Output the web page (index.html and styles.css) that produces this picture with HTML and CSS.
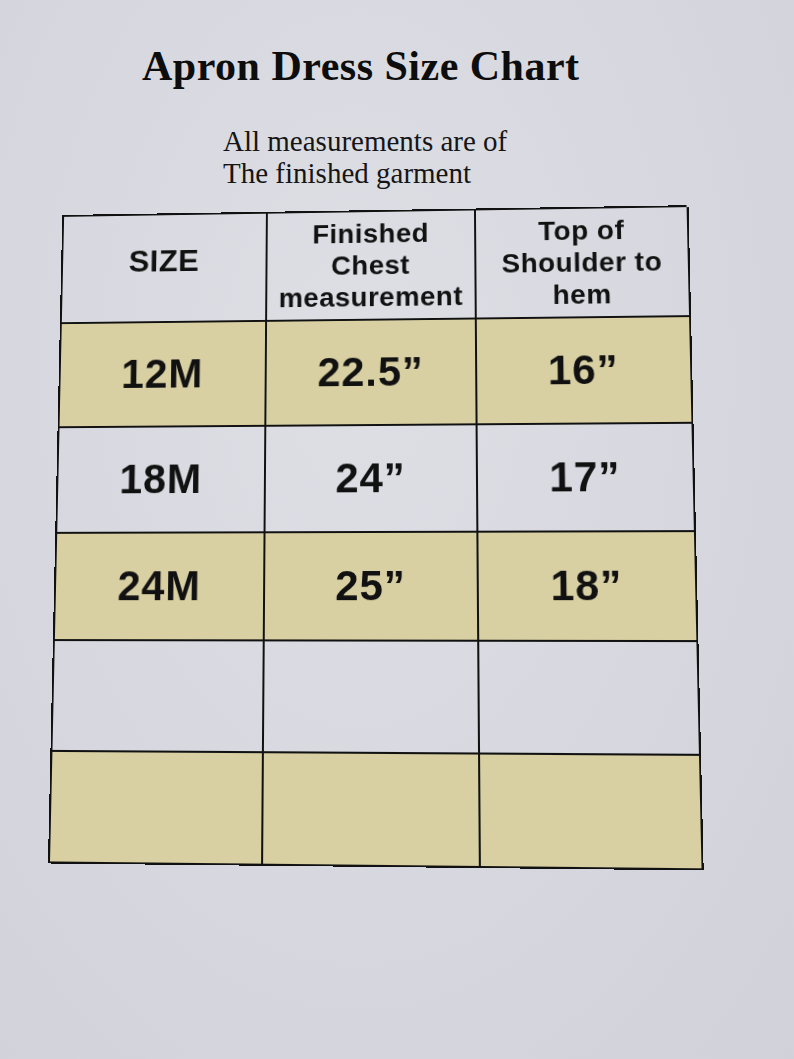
FILE: index.html
```html
<!DOCTYPE html>
<html lang="en">
<head>
<meta charset="utf-8">
<title>Apron Dress Size Chart</title>
<link rel="stylesheet" href="styles.css">
</head>
<body>
<main class="sheet">
  <h1 class="title">Apron Dress Size Chart</h1>
  <p class="note">All measurements are of<br>The finished garment</p>
  <div class="chart">
    <div class="cell head size">SIZE</div>
    <div class="cell head">Finished<br>Chest<br>measurement</div>
    <div class="cell head">Top of<br>Shoulder to<br>hem</div>

    <div class="cell data tint">12M</div>
    <div class="cell data tint">22.5”</div>
    <div class="cell data tint">16”</div>

    <div class="cell data">18M</div>
    <div class="cell data">24”</div>
    <div class="cell data">17”</div>

    <div class="cell data tint">24M</div>
    <div class="cell data tint">25”</div>
    <div class="cell data tint">18”</div>

    <div class="cell data"></div>
    <div class="cell data"></div>
    <div class="cell data"></div>

    <div class="cell data tint"></div>
    <div class="cell data tint"></div>
    <div class="cell data tint"></div>
  </div>
</main>
</body>
</html>
```

FILE: styles.css
```css
html, body {
  margin: 0;
  padding: 0;
}
body {
  width: 794px;
  height: 1059px;
  overflow: hidden;
  background: radial-gradient(ellipse at 45% 35%, #dedfe5 0%, #d7d8df 55%, #d0d1d9 100%);
  color: #111;
}
.sheet {
  display: flex;
  flex-direction: column;
  padding-top: 42px;
}
.title {
  margin: 0;
  padding-left: 142px;
  font-family: "Liberation Serif", "Times New Roman", serif;
  font-weight: bold;
  font-size: 42px;
  line-height: 48px;
  letter-spacing: 0.5px;
  color: #0d0d0d;
}
.note {
  margin: 35px 0 0 0;
  padding-left: 223px;
  font-family: "Liberation Serif", "Times New Roman", serif;
  font-size: 29px;
  line-height: 32px;
  color: #151515;
}
.chart {
  margin: 13px 0 0 51px;
  width: 639px;
  display: grid;
  grid-template-columns: 212px 213px 214px;
  grid-template-rows: 113px 108px 108px 108px 110px 109px;
  border-top: 2px solid #111;
  border-left: 2px solid #111;
  box-sizing: border-box;
  transform: perspective(1000px) rotateX(4deg) rotateY(-2.3deg);
  transform-origin: 50% 50%;
}
.cell {
  border-right: 2px solid #111;
  border-bottom: 2px solid #111;
  display: flex;
  align-items: center;
  justify-content: center;
  text-align: center;
  font-family: "Liberation Sans", Arial, sans-serif;
  font-weight: bold;
  color: #111;
}
.head {
  font-size: 28px;
  line-height: 33px;
  letter-spacing: 0.5px;
}
.size {
  font-size: 32px;
  padding-bottom: 14px;
}
.data {
  font-size: 42px;
  letter-spacing: 1px;
}
.tint {
  background: #d8d0a3;
}
```
